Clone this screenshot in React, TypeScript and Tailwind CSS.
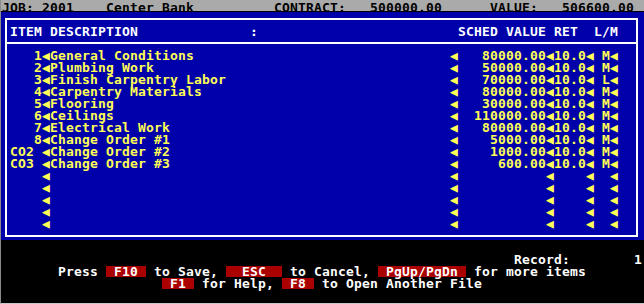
import type { FC } from 'react';

type Item = { no: string; desc: string; value: string; lm: string };

const items: Item[] = [
  { no: '   1', desc: 'General Conditions', value: '80000.00', lm: 'M' },
  { no: '   2', desc: 'Plumbing Work', value: '50000.00', lm: 'M' },
  { no: '   3', desc: 'Finish Carpentry Labor', value: '70000.00', lm: 'L' },
  { no: '   4', desc: 'Carpentry Materials', value: '80000.00', lm: 'M' },
  { no: '   5', desc: 'Flooring', value: '30000.00', lm: 'M' },
  { no: '   6', desc: 'Ceilings', value: '110000.00', lm: 'M' },
  { no: '   7', desc: 'Electrical Work', value: '80000.00', lm: 'M' },
  { no: '   8', desc: 'Change Order #1', value: '5000.00', lm: 'M' },
  { no: 'CO2', desc: 'Change Order #2', value: '1000.00', lm: 'M' },
  { no: 'CO3', desc: 'Change Order #3', value: '600.00', lm: 'M' },
];

const BLANK_ROWS = 5;
const ARROW = '◀';

// build a text-mode line by dropping strings at fixed columns
const place = (parts: [number, string][], from = 0) =>
  parts.reduce((s, [col, text]) => s.padEnd(col - from, ' ') + text, '');

const itemLine = (item?: Item) =>
  item
    ? place(
        [
          [1, item.no],
          [5, ARROW],
          [6, item.desc],
          [56, ARROW],
          [68 - item.value.length, item.value],
          [68, ARROW],
          [69, '10.0'],
          [73, ARROW],
          [75, item.lm],
          [76, ARROW],
        ],
        1,
      )
    : place(
        [
          [5, ARROW],
          [56, ARROW],
          [68, ARROW],
          [73, ARROW],
          [76, ARROW],
        ],
        1,
      );

const Key: FC<{ label: string }> = ({ label }) => (
  <span className="inline-block h-[11px] bg-[#aa0000] align-top">{label}</span>
);

const Row: FC<{ children: React.ReactNode }> = ({ children }) => (
  <div className="h-[12px] whitespace-pre leading-[12px]">{children}</div>
);

export default function App() {
  const rows = [...items, ...Array<undefined>(BLANK_ROWS).fill(undefined)];

  return (
    <div className="flex h-[304px] w-[644px] flex-col overflow-hidden border-b border-l border-b-[#c8c8c8] border-l-[#8a8a8a] bg-black font-['DejaVu_Sans_Mono',monospace] text-[13px] font-bold leading-[12px] tracking-[0.174px]">
      <div className="h-[11px] shrink-0 whitespace-pre bg-[#aaaaaa] pl-px pt-[2px] text-black">
        {place([
          [0, 'JOB:'],
          [5, '2001'],
          [13, 'Center Bank'],
          [34, 'CONTRACT:'],
          [46, '500000.00'],
          [61, 'VALUE:'],
          [70, '506600.00'],
        ])}
      </div>

      <div className="mt-px h-[228px] shrink-0 bg-[#0000aa] pl-[4px] pt-[6px]">
        <div className="flex h-[219px] w-[633px] flex-col border-2 border-white">
          <div className="pl-[3px] pt-[6px] text-white">
            <Row>
              {place(
                [
                  [1, 'ITEM DESCRIPTION'],
                  [31, ':'],
                  [57, 'SCHED VALUE RET  L/M'],
                ],
                1,
              )}
            </Row>
          </div>
          <div className="mt-[4px] h-[2px] bg-white" />
          <div className="pl-[3px] pt-[6px] text-[#ffff55]">
            {rows.map((item, i) => (
              <Row key={i}>{itemLine(item)}</Row>
            ))}
          </div>
        </div>
      </div>

      <div className="pl-px pt-[14px] text-white">
        <Row>
          {place([
            [64, 'Record:'],
            [79, '1'],
          ])}
        </Row>
        <Row>
          {'       Press '}
          <Key label=" F10 " />
          {' to Save, '}
          <Key label="  ESC  " />
          {' to Cancel, '}
          <Key label=" PgUp/PgDn " />
          {' for more items'}
        </Row>
        <Row>
          {'                    '}
          <Key label=" F1 " />
          {' for Help, '}
          <Key label=" F8 " />
          {' to Open Another File'}
        </Row>
      </div>
    </div>
  );
}
